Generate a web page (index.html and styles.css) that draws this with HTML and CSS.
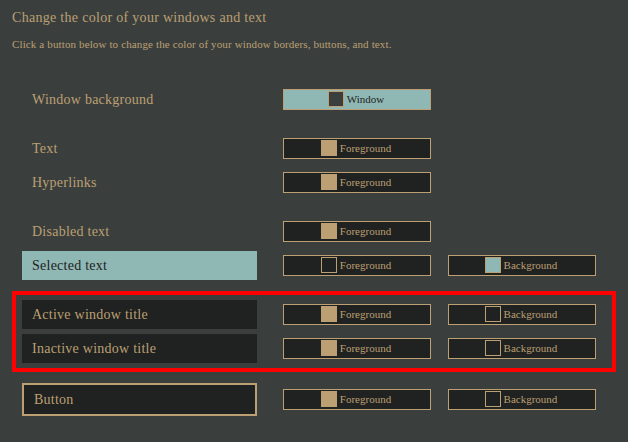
FILE: index.html
```html
<!DOCTYPE html>
<html lang="en">
<head>
<meta charset="UTF-8">
<meta name="viewport" content="width=device-width, initial-scale=1.0">
<title>Window colors</title>

<link rel="stylesheet" href="styles.css">

</head>
<body>

<div class="page">
  <h2>Change the color of your windows and text</h2>
  <p class="intro">Click a button below to change the color of your window borders, buttons, and text.</p>

  <div class="groups">
    <div class="group">
      <div class="row">
        <div class="label">Window background</div>
        <button class="pick pick-window"><span class="swatch swatch-window"></span>Window</button>
      </div>
    </div>

    <div class="group">
      <div class="row">
        <div class="label">Text</div>
        <button class="pick"><span class="swatch swatch-fg"></span>Foreground</button>
      </div>
      <div class="row">
        <div class="label">Hyperlinks</div>
        <button class="pick"><span class="swatch swatch-fg"></span>Foreground</button>
      </div>
    </div>

    <div class="group">
      <div class="row">
        <div class="label">Disabled text</div>
        <button class="pick"><span class="swatch swatch-fg"></span>Foreground</button>
      </div>
      <div class="row">
        <div class="label label-selected">Selected text</div>
        <button class="pick"><span class="swatch swatch-dark"></span>Foreground</button>
        <button class="pick"><span class="swatch swatch-teal"></span>Background</button>
      </div>
    </div>

    <div class="group group-marked">
      <div class="row">
        <div class="label label-dark">Active window title</div>
        <button class="pick"><span class="swatch swatch-fg"></span>Foreground</button>
        <button class="pick"><span class="swatch swatch-dark"></span>Background</button>
      </div>
      <div class="row">
        <div class="label label-dark">Inactive window title</div>
        <button class="pick"><span class="swatch swatch-fg"></span>Foreground</button>
        <button class="pick"><span class="swatch swatch-dark"></span>Background</button>
      </div>
      <div class="marker"></div>
    </div>

    <div class="group">
      <div class="row row-button">
        <div class="label label-button">Button</div>
        <button class="pick"><span class="swatch swatch-fg"></span>Foreground</button>
        <button class="pick"><span class="swatch swatch-dark"></span>Background</button>
      </div>
    </div>
  </div>
</div>

</body>
</html>
```

FILE: styles.css
```css
/* Global Styles */
body {
  font-family: "Liberation Serif", serif;
  background-color: #3a3f3e;
  color: #bc9f72;
  margin: 0;
  padding: 0;
}
.page {
  width: 628px;
  height: 442px;
  overflow: hidden;
  padding: 9px 0 0 12px;
  box-sizing: border-box;
}
h2 {
  margin: 0;
  font-size: 14px;
  font-weight: normal;
  line-height: 18px;
  letter-spacing: 0.3px;
}
.intro {
  margin: 10px 0 0;
  font-size: 11px;
  line-height: 14px;
  letter-spacing: 0.13px;
}
.groups {
  display: flex;
  flex-direction: column;
  gap: 20px;
  margin: 34px 0 0 10px;
}
.group {
  display: flex;
  flex-direction: column;
  gap: 5px;
  position: relative;
}
.row {
  display: flex;
  align-items: center;
  height: 29px;
}
.row-button {
  height: 33px;
}
.label {
  width: 235px;
  height: 100%;
  margin-right: 26px;
  padding-left: 10px;
  box-sizing: border-box;
  display: flex;
  align-items: center;
  font-size: 14px;
  letter-spacing: 0.25px;
}
.label-selected {
  background-color: #8fb8b5;
  color: #1f2221;
}
.label-dark {
  background-color: #1f2221;
}
.label-button {
  background-color: #1f2221;
  border: 2px solid #bc9f72;
}
.pick {
  width: 148px;
  height: 21px;
  margin: 0 17px 0 0;
  padding: 0 2px 1px 0;
  display: flex;
  align-items: center;
  justify-content: center;
  gap: 3px;
  background-color: #1f2221;
  border: 1px solid #bc9f72;
  color: #bc9f72;
  font-family: "Liberation Serif", serif;
  font-size: 11px;
}
.pick-window {
  background-color: #8fb8b5;
  color: #1f2221;
}
.swatch {
  width: 16px;
  height: 16px;
  box-sizing: border-box;
  border: 1px solid #bc9f72;
}
.swatch-window {
  background-color: #3a3f3e;
}
.swatch-fg {
  background-color: #bc9f72;
}
.swatch-dark {
  background-color: #1f2221;
}
.swatch-teal {
  background-color: #8fb8b5;
}
/* red outline drawn over the two title rows */
.marker {
  position: absolute;
  top: -9px;
  bottom: -9px;
  left: -10px;
  width: 604px;
  box-sizing: border-box;
  border: 4px solid #ff0000;
}
```
